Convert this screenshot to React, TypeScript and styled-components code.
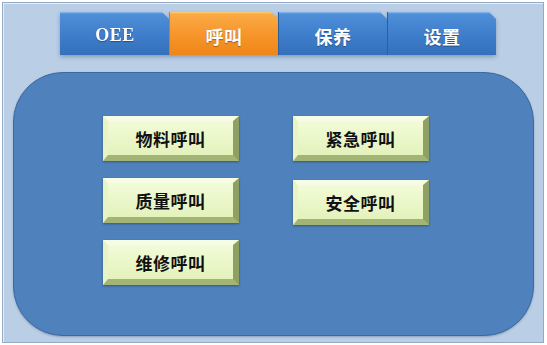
import styled, { createGlobalStyle } from "styled-components"

const GlobalStyle = createGlobalStyle`
  html, body {
    margin: 0;
    padding: 0;
    background: #ffffff;
  }
  body {
    font-family: "Liberation Serif", "Noto Sans CJK SC", serif;
  }
`

const Frame = styled.div`
  box-sizing: border-box;
  margin: 2px 0 0 2px;
  width: 542px;
  height: 341px;
  background: #bacee6;
  border: 1px solid #93a9c6;
  box-shadow: inset 1px 1px 0 #e4edf8;
  display: flex;
  flex-direction: column;
  padding: 9px 0 0 57px;
`

const Tabs = styled.div`
  display: flex;
  height: 43px;
  filter: drop-shadow(0 2px 2px rgba(40, 60, 90, 0.35));
`

const Tab = styled.div<{ $active?: boolean }>`
  width: 109px;
  height: 43px;
  display: flex;
  align-items: center;
  justify-content: center;
  padding-top: 4px;
  color: #ffffff;
  font-size: 18px;
  font-weight: bold;
  letter-spacing: 0.5px;
  text-shadow: 0 1px 1px rgba(0, 0, 0, 0.35);
  clip-path: polygon(0 0, calc(100% - 7px) 0, 100% 7px, 100% 100%, 0 100%);
  background: ${(p) =>
    p.$active
      ? "linear-gradient(#fdd27a 0, #fbaa45 2px, #f7962c 50%, #ee8617 100%)"
      : "linear-gradient(#8dbcf0 0, #4f8ed8 2px, #3f7fcc 50%, #3570bb 100%)"};
  border-left: 1px solid ${(p) => (p.$active ? "#d9771a" : "#2c5f9f")};
  box-sizing: border-box;
  &:first-child {
    border-left-color: transparent;
  }
`

const Panel = styled.div`
  box-sizing: border-box;
  margin: 17px 0 0 -47px;
  width: 521px;
  height: 264px;
  background: #4f81bd;
  border: 1px solid #3c699f;
  border-radius: 50px;
  box-shadow: 0 1px 2px rgba(40, 60, 90, 0.3);
  display: flex;
  gap: 54px;
  padding: 43px 0 0 89px;
`

const Column = styled.div<{ $gap: number }>`
  display: flex;
  flex-direction: column;
  gap: ${(p) => p.$gap}px;
`

const CallButton = styled.button`
  box-sizing: border-box;
  width: 136px;
  height: 45px;
  padding: 0;
  border-style: solid;
  border-width: 5px 6px 6px 5px;
  border-color: #f6fde4 #8fa162 #a3b575 #e8f4c6;
  background: linear-gradient(#f2fbd8, #e3f2bb);
  box-shadow: 0 1px 2px rgba(20, 40, 60, 0.45);
  color: #111111;
  font-family: "Noto Sans CJK SC", serif;
  font-size: 17px;
  font-weight: bold;
  letter-spacing: 0.5px;
  cursor: pointer;
`

export default function App() {
  return (
    <>
      <GlobalStyle />
      <Frame>
        <Tabs>
          <Tab>OEE</Tab>
          <Tab $active>呼叫</Tab>
          <Tab>保养</Tab>
          <Tab>设置</Tab>
        </Tabs>
        <Panel>
          <Column $gap={17}>
            <CallButton>物料呼叫</CallButton>
            <CallButton>质量呼叫</CallButton>
            <CallButton>维修呼叫</CallButton>
          </Column>
          <Column $gap={19}>
            <CallButton>紧急呼叫</CallButton>
            <CallButton>安全呼叫</CallButton>
          </Column>
        </Panel>
      </Frame>
    </>
  )
}
